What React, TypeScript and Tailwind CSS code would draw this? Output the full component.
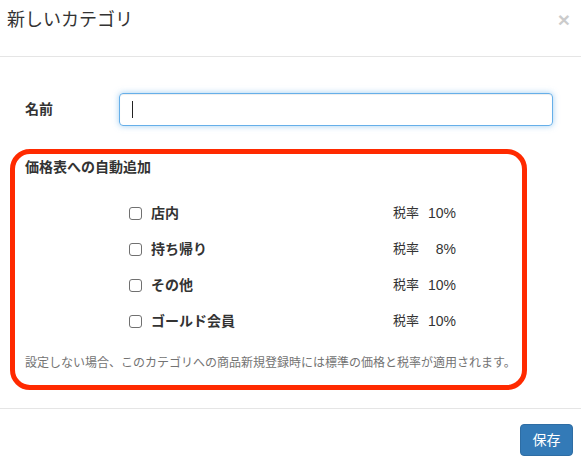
import React from 'react';

const rows = [
  { name: '店内', rate: '10%' },
  { name: '持ち帰り', rate: '8%' },
  { name: 'その他', rate: '10%' },
  { name: 'ゴールド会員', rate: '10%' },
];

export default function App() {
  return (
    <div
      className="w-[581px] h-[467px] bg-white text-[#333] overflow-hidden"
      style={{ fontFamily: '"Liberation Sans", "Noto Sans CJK JP", sans-serif' }}
    >
      {/* header */}
      <div className="h-[57px] border-b border-[#e5e5e5] flex items-start justify-between pl-[7px] pr-[11px] pt-[8px]">
        <h4 className="text-[18px] leading-[24px] font-normal">新しいカテゴリ</h4>
        <span className="text-[21px] leading-[24px] font-bold text-black opacity-20">×</span>
      </div>

      {/* body */}
      <div className="pb-[18px]">
        <div className="flex items-center mt-[36px]">
          <label className="w-[119px] pl-[25px] text-[14px] font-bold">名前</label>
          <div className="w-[434px] h-[33px] rounded-[4px] border border-[#66afe9] shadow-[inset_0_1px_1px_rgba(0,0,0,0.075),0_0_6px_rgba(102,175,233,0.6)] flex items-center pl-[12px]">
            <span className="w-px h-[17px] bg-[#222]" />
          </div>
        </div>

        {/* highlighted section */}
        <div className="mt-[23px] ml-[10px] w-[517px] h-[241px] border-[5px] border-[#ff2a00] rounded-[20px] pl-[10px] pt-[3px]">
          <div className="text-[14px] leading-[20px] font-bold">価格表への自動追加</div>
          <div className="mt-[18px]">
            {rows.map((r) => (
              <div key={r.name} className="h-[36px] flex items-center">
                <span className="ml-[104px] w-[13px] h-[13px] rounded-[3px] border border-[#707070] bg-white" />
                <span className="ml-[9px] w-[242px] text-[14px] font-bold">{r.name}</span>
                <span className="text-[13px] w-[26px]">税率</span>
                <span className="text-[14px] w-[37px] text-right">{r.rate}</span>
              </div>
            ))}
          </div>
          <p className="mt-[15px] text-[12px] leading-[18px] text-[#737373]">
            設定しない場合、このカテゴリへの商品新規登録時には標準の価格と税率が適用されます。
          </p>
        </div>
      </div>

      {/* footer */}
      <div className="border-t border-[#e5e5e5] flex justify-end pt-[15px] pr-[8px]">
        <button className="w-[53px] h-[32px] rounded-[4px] bg-[#337ab7] border border-[#2e6da4] text-white text-[14px]">
          保存
        </button>
      </div>
    </div>
  );
}
